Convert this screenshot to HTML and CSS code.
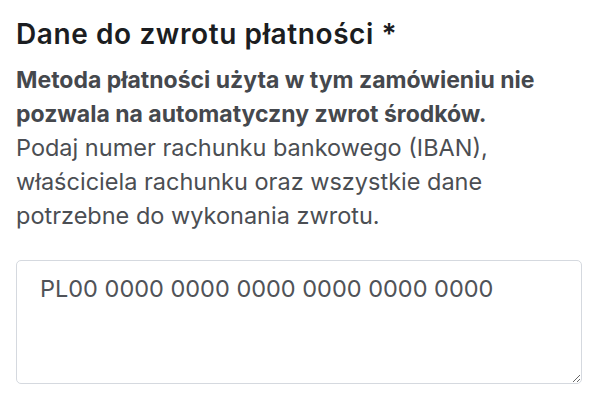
FILE: index.html
```html
<!DOCTYPE html>
<html lang="pl">
<head>
<meta charset="utf-8">
<link rel="stylesheet" href="styles.css">
</head>
<body>
<section class="refund">
  <h2 class="title">Dane do zwrotu płatności *</h2>
  <p class="desc"><strong class="desc-strong">Metoda płatności użyta w tym zamówieniu nie pozwala na automatyczny zwrot środków.</strong><br>Podaj numer rachunku bankowego (IBAN), właściciela rachunku oraz wszystkie dane potrzebne do wykonania zwrotu.</p>
  <textarea class="iban" placeholder="PL00 0000 0000 0000 0000 0000 0000"></textarea>
</section>
</body>
</html>
```
FILE: styles.css
```css
html, body {
  margin: 0;
  padding: 0;
  background: #ffffff;
}
body {
  font-family: Inter, "Noto Sans", sans-serif;
}
.refund {
  padding: 16px 16px 0 16px;
  width: 568px;
}
.title {
  margin: 0;
  font-size: 28px;
  line-height: 36px;
  font-weight: 600;
  letter-spacing: 0.6px;
  color: #1b1d21;
}
.desc {
  margin: 0;
  margin-top: 11px;
  font-size: 23.5px;
  line-height: 34px;
  color: #4b4e53;
}
.desc-strong {
  font-size: 23px;
  font-weight: 700;
  color: #45484d;
}
.iban {
  display: block;
  box-sizing: border-box;
  margin-top: 27px;
  width: 566px;
  height: 124px;
  padding: 13px 23px 8px;
  border: 1px solid #d5d9df;
  border-radius: 5px;
  font-family: Inter, "Noto Sans", sans-serif;
  font-size: 23.5px;
  line-height: 30px;
  color: #4b4e53;
  resize: vertical;
  outline: none;
}
.iban::placeholder {
  color: #505358;
  opacity: 1;
}
```
